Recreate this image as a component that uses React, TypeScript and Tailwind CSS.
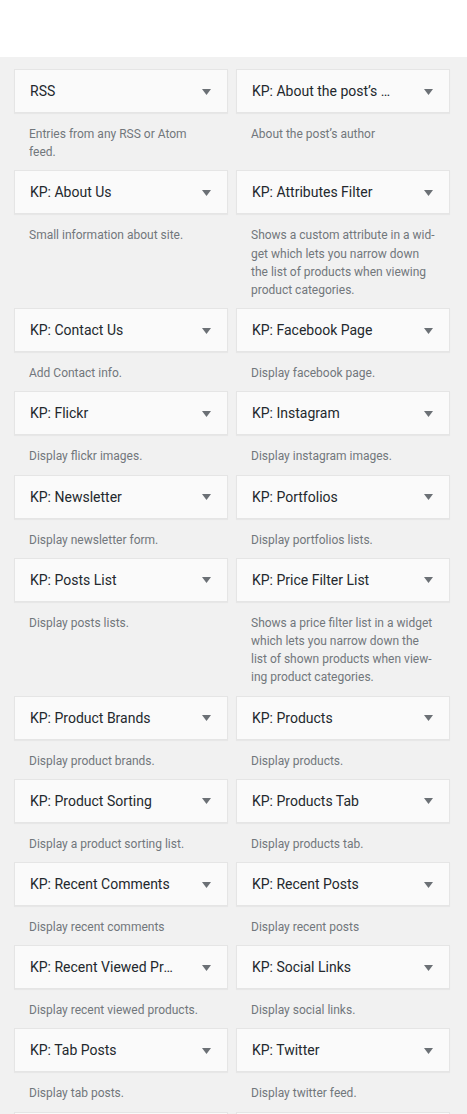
import React from "react";

type W = { title: string; desc: string };

const widgets: W[] = [
  { title: "RSS", desc: "Entries from any RSS or Atom feed." },
  { title: "KP: About the post’s author", desc: "About the post’s author" },
  { title: "KP: About Us", desc: "Small information about site." },
  {
    title: "KP: Attributes Filter",
    desc: "Shows a custom attribute in a wid\u00ADget which lets you narrow down the list of products when viewing product categories.",
  },
  { title: "KP: Contact Us", desc: "Add Contact info." },
  { title: "KP: Facebook Page", desc: "Display facebook page." },
  { title: "KP: Flickr", desc: "Display flickr images." },
  { title: "KP: Instagram", desc: "Display instagram images." },
  { title: "KP: Newsletter", desc: "Display newsletter form." },
  { title: "KP: Portfolios", desc: "Display portfolios lists." },
  { title: "KP: Posts List", desc: "Display posts lists." },
  {
    title: "KP: Price Filter List",
    desc: "Shows a price filter list in a widget which lets you narrow down the list of shown products when view\u00ADing product categories.",
  },
  { title: "KP: Product Brands", desc: "Display product brands." },
  { title: "KP: Products", desc: "Display products." },
  { title: "KP: Product Sorting", desc: "Display a product sorting list." },
  { title: "KP: Products Tab", desc: "Display products tab." },
  { title: "KP: Recent Comments", desc: "Display recent comments" },
  { title: "KP: Recent Posts", desc: "Display recent posts" },
  { title: "KP: Recent Viewed Products", desc: "Display recent viewed products." },
  { title: "KP: Social Links", desc: "Display social links." },
  { title: "KP: Tab Posts", desc: "Display tab posts." },
  { title: "KP: Twitter", desc: "Display twitter feed." },
  { title: "KP: Video", desc: "Display video." },
  { title: "KP: Woo Products", desc: "Display woocommerce products." },
];

function Widget({ w }: { w: W }) {
  return (
    <div className="flex flex-col">
      <div className="flex h-[44px] items-center border border-[#e5e5e5] bg-[#fafafa] pl-[15px] pr-[11px] pt-[1px] shadow-[0_1px_1px_rgba(0,0,0,0.04)]">
        <h3 className="min-w-0 max-w-[143px] flex-1 truncate text-[14px] font-normal text-[#23282d]">
          {w.title}
        </h3>
        <div className="ml-auto flex h-[20px] w-[20px] items-center justify-center">
          <svg width="9" height="6" viewBox="0 0 9 6">
            <path d="M0 0 H9 L4.5 6 Z" fill="#6b7075" />
          </svg>
        </div>
      </div>
      <p className="mb-[9px] mt-[12px] pl-[15px] pr-[14px] text-[12px] leading-[18.2px] text-[#72777c]">
        {w.desc}
      </p>
    </div>
  );
}

export default function App() {
  return (
    <div
      className="min-h-[1114px] bg-[#f1f1f1]"
      style={{ fontFamily: 'Roboto, "Noto Sans", sans-serif' }}
    >
      <div className="h-[57px] bg-white" />
      <div className="grid grid-cols-2 gap-x-[8px] pl-[14px] pr-[17px] pt-[12px]">
        {widgets.map((w, i) => (
          <Widget key={i} w={w} />
        ))}
      </div>
    </div>
  );
}
